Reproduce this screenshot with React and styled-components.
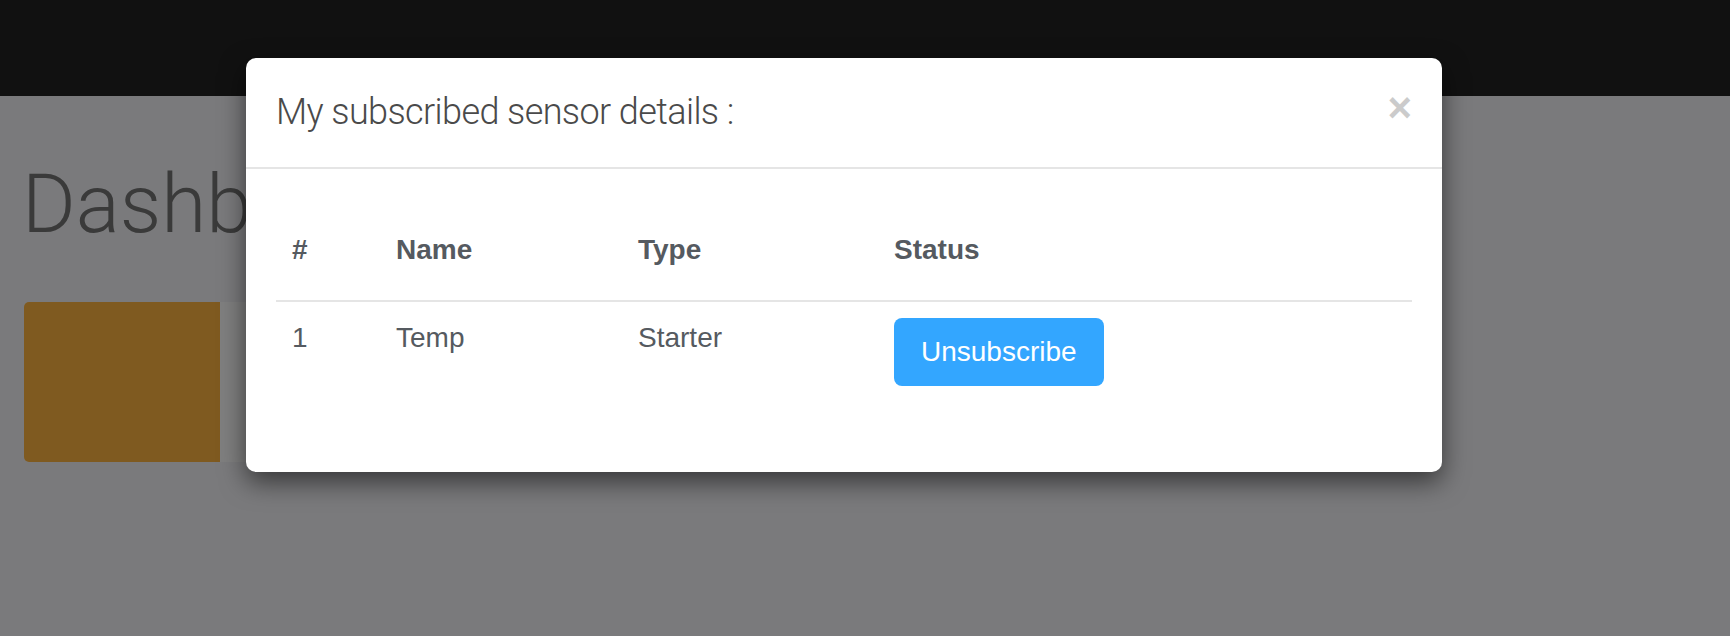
import React from "react";
import styled, { createGlobalStyle } from "styled-components";

const GlobalStyle = createGlobalStyle`
  html, body {
    margin: 0;
    padding: 0;
    background: #f4f5f8;
    font-family: "Liberation Sans", Arial, sans-serif;
  }
  * { box-sizing: border-box; }
`;

const Page = styled.div`
  position: relative;
  min-height: 636px;
  overflow: hidden;
`;

const Navbar = styled.header`
  height: 96px;
  background: #222;
`;

const Main = styled.main`
  padding: 0 24px;
`;

const Heading = styled.h1`
  margin: 64px 0 0 -2px;
  font-family: "Roboto", "Liberation Sans", sans-serif;
  font-weight: 300;
  font-size: 82px;
  line-height: 88px;
  color: #747474;
`;

const InfoBox = styled.div`
  display: flex;
  width: 520px;
  height: 160px;
  margin-top: 54px;
  border-radius: 5px;
  overflow: hidden;
  background: #ffffff;
`;

const InfoIcon = styled.div`
  width: 196px;
  background: ${(p) => p.$color};
`;

const Backdrop = styled.div`
  position: absolute;
  inset: 0;
  background: rgba(0, 0, 0, 0.5);
`;

const Modal = styled.div`
  position: absolute;
  top: 58px;
  left: 246px;
  width: 1196px;
  background: #fff;
  border-radius: 10px;
  box-shadow: 0 10px 26px rgba(0, 0, 0, 0.55);
`;

const ModalHeader = styled.div`
  display: flex;
  justify-content: space-between;
  align-items: flex-start;
  padding: 29px 30px;
  border-bottom: 2px solid #e5e5e5;
`;

const ModalTitle = styled.h4`
  margin: 0;
  font-family: "Roboto", "Liberation Sans", sans-serif;
  font-weight: 300;
  font-size: 36px;
  line-height: 51px;
  color: #4a4a4a;
  letter-spacing: -0.6px;
`;

const CloseButton = styled.button`
  padding: 0;
  border: 0;
  background: transparent;
  font-family: "Liberation Sans", Arial, sans-serif;
  font-weight: 700;
  font-size: 42px;
  line-height: 1;
  color: #000;
  opacity: 0.2;
  cursor: pointer;
`;

const ModalBody = styled.div`
  padding: 31px 30px 30px;
`;

const Table = styled.table`
  width: 100%;
  margin-bottom: 40px;
  border-collapse: collapse;
  table-layout: fixed;
  font-family: "Liberation Sans", Arial, sans-serif;
  font-size: 28px;
  line-height: 40px;
  color: #555a60;
`;

const Col = styled.col`
  width: ${(p) => p.$w}px;
`;

const Th = styled.th`
  padding: 30px 16px;
  text-align: left;
  font-weight: 700;
  border-bottom: 2px solid #e5e5e5;
`;

const Td = styled.td`
  padding: 16px;
  vertical-align: top;
`;

const PrimaryButton = styled.button`
  border: 0;
  border-radius: 8px;
  padding: 14px 27px 14px;
  background: #33a6ff;
  color: #fff;
  font-family: "Liberation Sans", Arial, sans-serif;
  font-size: 28px;
  line-height: 40px;
  cursor: pointer;
`;

const rows = [{ id: 1, name: "Temp", type: "Starter" }];

export default function App() {
  return (
    <Page>
      <GlobalStyle />
      <Navbar />
      <Main>
        <Heading>Dashboard</Heading>
        <InfoBox>
          <InfoIcon $color="#feb440" />
        </InfoBox>
      </Main>
      <Backdrop />
      <Modal role="dialog">
        <ModalHeader>
          <ModalTitle>My subscribed sensor details :</ModalTitle>
          <CloseButton aria-label="Close">×</CloseButton>
        </ModalHeader>
        <ModalBody>
          <Table>
            <colgroup>
              <Col $w={104} />
              <Col $w={242} />
              <Col $w={256} />
              <Col $w={534} />
            </colgroup>
            <thead>
              <tr>
                <Th>#</Th>
                <Th>Name</Th>
                <Th>Type</Th>
                <Th>Status</Th>
              </tr>
            </thead>
            <tbody>
              {rows.map((r) => (
                <tr key={r.id}>
                  <Td>{r.id}</Td>
                  <Td>{r.name}</Td>
                  <Td>{r.type}</Td>
                  <Td>
                    <PrimaryButton>Unsubscribe</PrimaryButton>
                  </Td>
                </tr>
              ))}
            </tbody>
          </Table>
        </ModalBody>
      </Modal>
    </Page>
  );
}
